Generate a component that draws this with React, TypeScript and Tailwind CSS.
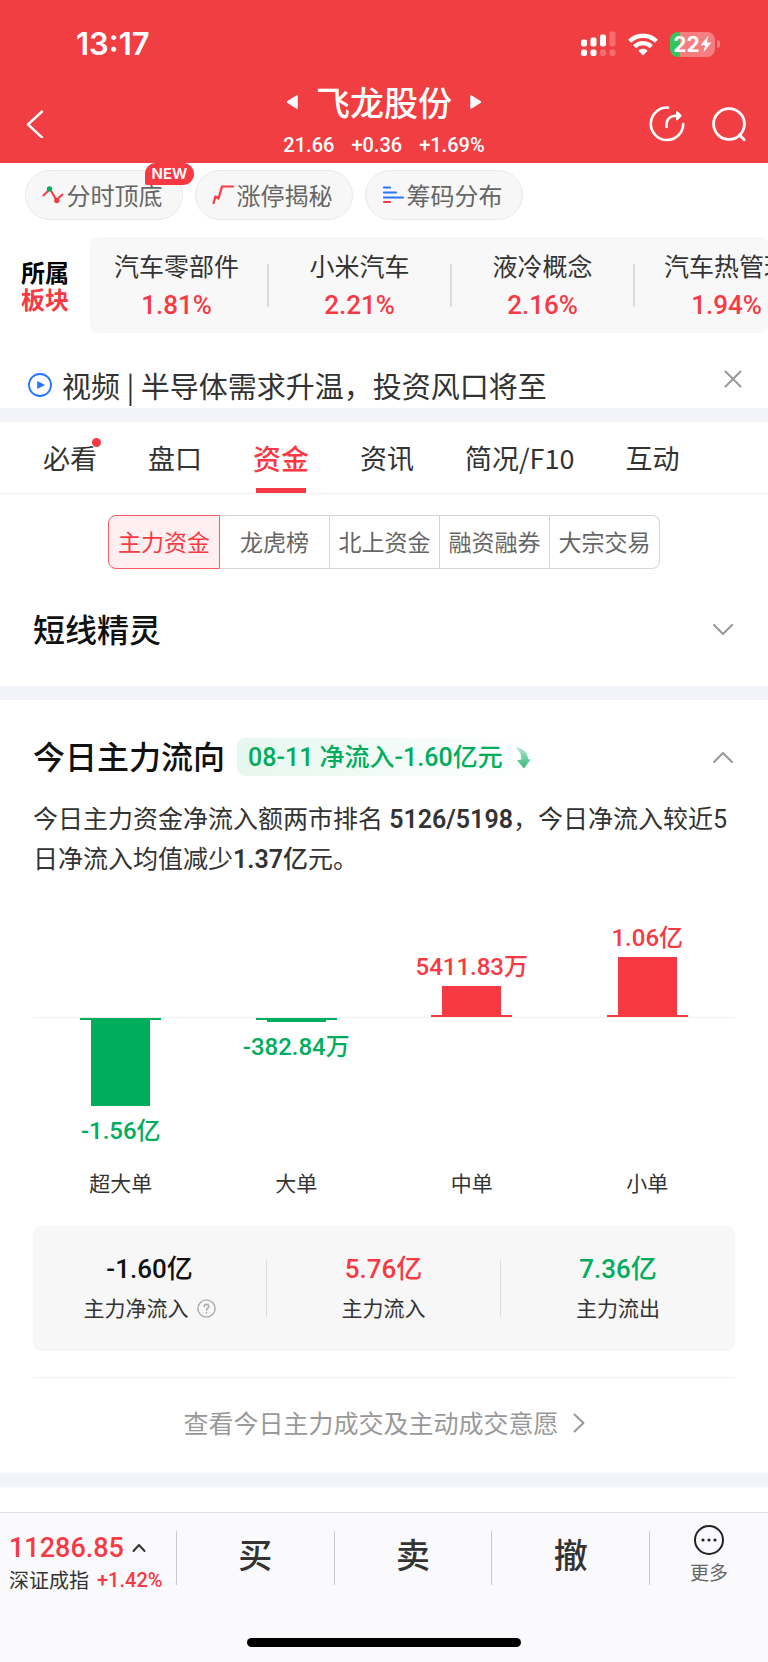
import type { ReactNode } from "react";

type Sector = { name: string; change: string };
type Flow = { label: string; value: string; height: number; up: boolean };

const tools = ["分时顶底", "涨停揭秘", "筹码分布"];

const sectors: Sector[] = [
  { name: "汽车零部件", change: "1.81%" },
  { name: "小米汽车", change: "2.21%" },
  { name: "液冷概念", change: "2.16%" },
  { name: "汽车热管理", change: "1.94%" },
];

const tabs = ["必看", "盘口", "资金", "资讯", "简况/F10", "互动"];
const subTabs = ["主力资金", "龙虎榜", "北上资金", "融资融券", "大宗交易"];

const flows: Flow[] = [
  { label: "超大单", value: "-1.56亿", height: 88, up: false },
  { label: "大单", value: "-382.84万", height: 4, up: false },
  { label: "中单", value: "5411.83万", height: 31, up: true },
  { label: "小单", value: "1.06亿", height: 60, up: true },
];

const Chevron: React.FC<{ className: string; d: string; box: string }> = ({
  className,
  d,
  box,
}) => (
  <svg className={className} viewBox={box} fill="none" stroke="currentColor" strokeWidth="2">
    <path d={d} strokeLinecap="round" strokeLinejoin="round" />
  </svg>
);

const StatusIcons: React.FC = () => (
  <div className="flex items-center gap-3">
    <svg className="h-[26px] w-[35px]" viewBox="0 0 35 26" fill="#fff">
      <rect x="0" y="8.5" width="6" height="7" rx="2" />
      <rect x="9.5" y="6.5" width="6" height="9" rx="2" />
      <rect x="19" y="3.5" width="6" height="12" rx="2" />
      <rect x="28.5" y="0.5" width="6" height="15" rx="2" opacity=".25" />
      <rect x="0" y="18.5" width="6" height="6.5" rx="2" />
      <rect x="9.5" y="18.5" width="6" height="6.5" rx="2" />
      <rect x="19" y="18.5" width="6" height="6.5" rx="2" opacity=".25" />
      <rect x="28.5" y="18.5" width="6" height="6.5" rx="2" opacity=".25" />
    </svg>
    <svg className="h-[23px] w-[30px]" viewBox="0 0 30 23" fill="none" stroke="#fff">
      <path d="M1.6 8.2C9 .9 21 .9 28.4 8.2" strokeWidth="4.4" />
      <path d="M6.6 13.6C11.4 9 18.6 9 23.4 13.6" strokeWidth="4.4" />
      <path d="M10.4 17.8C13 15.2 17 15.2 19.6 17.8L15 22.4Z" fill="#fff" stroke="none" />
    </svg>
    <div className="flex items-center gap-0.5">
      <div className="flex h-[25px] w-[45px] items-center justify-center overflow-hidden rounded-lg bg-[linear-gradient(90deg,#34c759_10px,#f67e81_10px)] font-['Inter'] text-[21px] leading-[25px] font-bold">
        22
        <svg className="h-[18px] w-[12px]" viewBox="0 0 12 18" fill="#fff">
          <path d="M8.6 0.5L0.6 10.2H5.2L3.4 17.5L11.4 7.6H6.8Z" />
        </svg>
      </div>
      <span className="h-2 w-[3px] rounded-r-full bg-[#f67e81]" />
    </div>
  </div>
);

const Header: React.FC = () => (
  <header className="h-[163px] bg-[#f03e42] text-white">
    <div className="flex h-[82px] items-center justify-between pt-1.5 pr-12 pl-[76px]">
      <span className="font-['Inter'] text-[31px] font-semibold">13:17</span>
      <StatusIcons />
    </div>
    <div className="grid grid-cols-[1fr_auto_1fr] items-start">
      <button type="button" aria-label="返回" className="ml-6 w-6 pt-[28px]">
        <svg className="h-[28px] w-[20px]" viewBox="0 0 20 28" fill="none" stroke="#fff" strokeWidth="2.4">
          <path d="M18 1.5L4 14.5L18 27.5" strokeLinecap="round" strokeLinejoin="round" />
        </svg>
      </button>
      <div className="flex flex-col items-center">
        <div className="flex items-center gap-[18px]">
          <button type="button" aria-label="上一只">
            <svg className="h-4 w-3" viewBox="0 0 12 16" fill="#fff" stroke="#fff" strokeWidth="1.5" strokeLinejoin="round">
              <path d="M11 2V14L1.5 8Z" />
            </svg>
          </button>
          <h1 className="text-[34px] leading-[40px] font-medium">飞龙股份</h1>
          <button type="button" aria-label="下一只">
            <svg className="h-4 w-3" viewBox="0 0 12 16" fill="#fff" stroke="#fff" strokeWidth="1.5" strokeLinejoin="round">
              <path d="M1 2V14L10.5 8Z" />
            </svg>
          </button>
        </div>
        <p className="mt-[9px] flex gap-[17px] font-['Roboto'] text-[20px] leading-[28px] font-medium">
          <span>21.66</span>
          <span>+0.36</span>
          <span>+1.69%</span>
        </p>
      </div>
      <div className="flex justify-end gap-6 pt-[23px] pr-5">
        <button type="button" aria-label="分享">
          <svg className="h-[38px] w-[38px]" viewBox="0 0 38 38" fill="none" stroke="#fff" strokeWidth="2.6" strokeLinecap="round">
            <path d="M20 2.6A16.2 16.2 0 1 0 35.2 19" />
            <path d="M18.6 21.8C18 14.5 21.5 10.6 29.5 10.8" />
            <path d="M29 7L32.6 10.8L29 14.4Z" fill="#fff" strokeWidth="2" strokeLinejoin="round" />
          </svg>
        </button>
        <button type="button" aria-label="搜索">
          <svg className="h-[38px] w-[38px]" viewBox="0 0 38 38" fill="none" stroke="#fff" strokeWidth="2.8" strokeLinecap="round">
            <circle cx="19" cy="19" r="15.4" />
            <path d="M29.5 30L34.2 34.8" />
          </svg>
        </button>
      </div>
    </div>
  </header>
);

const toolIcons: ReactNode[] = [
  <svg key="a" className="h-[22px] w-[22px]" viewBox="0 0 22 22" fill="none" strokeWidth="2" strokeLinecap="round">
    <path d="M1.5 11.5L6 7" stroke="#f73944" />
    <path d="M9.5 7.5L13.5 14.5M16.5 14L20.5 10.5" stroke="#f73944" />
    <circle cx="7.5" cy="5" r="2.7" fill="#00ad5c" />
    <circle cx="14.8" cy="16.5" r="2.7" fill="#f73944" />
  </svg>,
  <svg key="b" className="h-[22px] w-[22px]" viewBox="0 0 22 22" fill="none" stroke="#f73944" strokeWidth="2.2" strokeLinecap="round" strokeLinejoin="round">
    <path d="M1.5 19L3.5 12.5L6.5 14.5L10 2.5H21" />
  </svg>,
  <svg key="c" className="h-[22px] w-[22px]" viewBox="0 0 22 22" fill="none" stroke="#2476ff" strokeWidth="2.2" strokeLinecap="round">
    <path d="M2 3.5H8M2 8.5H14M2 13.5H21" />
    <path d="M2 18H8" stroke="#f73944" />
  </svg>,
];

const ToolBar: React.FC = () => (
  <div className="flex gap-3 px-[25px] pt-[7px]">
    {tools.map((tool, i) => (
      <button
        type="button"
        key={tool}
        className="relative flex h-[50px] w-[158px] items-center justify-center gap-[3px] rounded-full border border-[#e9e9e9] bg-[#f7f7f7] pr-1 text-2xl text-[#666]"
      >
        {toolIcons[i]}
        {tool}
        {i === 0 && (
          <span className="absolute -top-2 -right-3 h-[22px] w-[49px] rounded-t-[11px] rounded-br-[11px] rounded-bl-xs bg-[#f73944] text-center font-['Inter'] text-[15px] leading-[22px] font-semibold text-white">
            NEW
          </span>
        )}
      </button>
    ))}
  </div>
);

const Sectors: React.FC = () => (
  <div className="mt-[17px] flex items-center">
    <h2 className="w-[90px] shrink-0 pl-[21px] text-2xl leading-[27px] font-bold text-black">
      所属
      <span className="block text-[#f73944]">板块</span>
    </h2>
    <ul className="flex h-24 min-w-0 flex-1 items-center overflow-hidden rounded-lg bg-[#f8f8f8]">
      {sectors.map((s, i) => (
        <li
          key={s.name}
          className="flex w-[183px] shrink-0 items-center first:w-[179px] first:[&>a]:pr-1"
        >
          <a href="#sector" className="block flex-1 text-center whitespace-nowrap">
            <span className="block text-[25px] leading-[36px] text-[#333]">{s.name}</span>
            <span className="block pt-1 font-['Roboto'] text-[26px] leading-[36px] font-medium text-[#f73944]">
              {s.change}
            </span>
          </a>
          {i < sectors.length - 1 && <span className="h-[43px] w-0.5 bg-[#ddd]" />}
        </li>
      ))}
    </ul>
  </div>
);

const News: React.FC = () => (
  <div className="flex h-[75px] items-center pt-7 pr-[26px] pl-7">
    <svg className="mr-2.5 h-6 w-6 shrink-0" viewBox="0 0 24 24">
      <circle cx="12" cy="12" r="11" fill="none" stroke="#2476ff" strokeWidth="1.8" />
      <path d="M9.2 8L17 12L9.2 16Z" fill="#2476ff" />
    </svg>
    <a href="#video" className="flex-1 text-[29px] leading-[40px] text-[#333]">
      视频 | 半导体需求升温，投资风口将至
    </a>
    <button type="button" aria-label="关闭" className="pb-3">
      <Chevron className="h-[18px] w-[18px] text-[#999]" box="0 0 18 18" d="M1.5 1.5L16.5 16.5M16.5 1.5L1.5 16.5" />
    </button>
  </div>
);

const Tabs: React.FC = () => (
  <nav className="flex h-[72px] gap-[51px] border-b border-[#f1f1f1] pl-[43px] text-[27px] leading-[72px] text-[#333]">
    {tabs.map((tab) => (
      <a
        href="#tab"
        key={tab}
        className={
          tab === "资金"
            ? "relative text-[28px] font-medium text-[#f73944]"
            : "relative whitespace-nowrap"
        }
      >
        {tab}
        {tab === "必看" && (
          <span className="absolute top-4 -right-1 h-[9px] w-[9px] rounded-full bg-[#f73944]" />
        )}
        {tab === "资金" && (
          <span className="absolute inset-x-[3px] bottom-0 h-[5px] bg-[#f73944]" />
        )}
      </a>
    ))}
  </nav>
);

const SubTabs: React.FC = () => (
  <div className="mt-[21px] flex justify-center">
    {subTabs.map((tab, i) => (
      <button
        type="button"
        key={tab}
        className={
          i === 0
            ? "h-[54px] w-[112px] rounded-l-lg border border-[#f95a64] bg-[#ffeff0] pb-0.5 text-[23px] text-[#f73944]"
            : "h-[54px] w-[110px] border border-l-0 border-[#d5d5d5] pb-0.5 text-[23px] text-[#666] last:rounded-r-lg"
        }
      >
        {tab}
      </button>
    ))}
  </div>
);

const FlowChart: React.FC = () => (
  <div className="grid grid-cols-4">
    {flows.map((f) => {
      const bar = (
        <div
          className={f.up ? "w-[59px] bg-[#f73944]" : "w-[59px] bg-[#00ad5c]"}
          style={{ height: f.height }}
        />
      );
      return (
        <div key={f.label} className="flex flex-col items-center font-['Roboto','Noto_Sans_CJK_SC',sans-serif]">
          <div className="flex h-[137px] flex-col items-center justify-end">
            {f.up && (
              <>
                <span className="text-[24px] leading-[38px] font-medium text-[#f73944]">{f.value}</span>
                {bar}
                <span className="-mt-0.5 h-0.5 w-[81px] bg-[#f73944]" />
              </>
            )}
          </div>
          <span className="h-px w-full bg-[#f1f1f1]" />
          <div className="flex h-[150px] flex-col items-center">
            {!f.up && (
              <>
                <span className="-mb-0.5 h-0.5 w-[81px] bg-[#00ad5c]" />
                {bar}
                <span className="mt-1.5 text-[24px] leading-[38px] font-medium text-[#00ad5c]">{f.value}</span>
              </>
            )}
          </div>
          <span className="text-[21px] leading-[32px] text-[#333]">{f.label}</span>
        </div>
      );
    })}
  </div>
);

const Summary: React.FC = () => (
  <dl className="mt-[26px] grid h-[125px] grid-cols-3 items-center divide-x divide-[#ddd] rounded-lg bg-[#f7f7f7] text-center font-['Roboto','Noto_Sans_CJK_SC',sans-serif]">
    <div className="flex h-[57px] flex-col-reverse justify-center">
      <dt className="flex items-center justify-center gap-2 text-[21px] leading-[40px] text-[#333]">
        主力净流入
        <svg className="h-[19px] w-[19px]" viewBox="0 0 19 19" fill="none" stroke="#aaa" strokeWidth="1.4" strokeLinecap="round">
          <circle cx="9.5" cy="9.5" r="8.6" />
          <path d="M7.2 7.6C7.2 4.6 11.8 4.6 11.8 7.5C11.8 9 9.5 9.3 9.5 11.2M9.5 13.6V13.8" strokeWidth="1.6" />
        </svg>
      </dt>
      <dd className="text-[26px] leading-[40px] font-medium text-[#111]">-1.60亿</dd>
    </div>
    <div className="flex h-[57px] flex-col-reverse justify-center">
      <dt className="text-[21px] leading-[40px] text-[#333]">主力流入</dt>
      <dd className="text-[26px] leading-[40px] font-medium text-[#f73944]">5.76亿</dd>
    </div>
    <div className="flex h-[57px] flex-col-reverse justify-center">
      <dt className="text-[21px] leading-[40px] text-[#333]">主力流出</dt>
      <dd className="text-[26px] leading-[40px] font-medium text-[#00ad5c]">7.36亿</dd>
    </div>
  </dl>
);

const Divider: React.FC = () => <div className="h-3.5 bg-[#f2f4f9]" />;

const MainFlow: React.FC = () => (
  <section className="px-[33px] pt-[38px]">
    <div className="flex h-[38px] items-center">
      <h2 className="pb-1 text-[32px] leading-[34px] font-medium text-[#111]">今日主力流向</h2>
      <div className="ml-3 flex h-[38px] w-[300px] items-center rounded-lg bg-linear-to-r from-[#e6f7ef] to-white pt-0.5 pl-[11px] font-['Roboto','Noto_Sans_CJK_SC',sans-serif] text-[25px] leading-[36px] font-medium whitespace-nowrap text-[#00ad5c]">
        08-11 净流入-1.60亿元
        <svg className="ml-3 h-[22px] w-[16px]" viewBox="0 0 16 22">
          <defs>
            <linearGradient id="drop" x1="0" y1="0" x2="0" y2="1">
              <stop offset="0" stopColor="#b4e6cf" />
              <stop offset="1" stopColor="#2eb877" />
            </linearGradient>
          </defs>
          <path d="M.5.5C8 1 13 5.5 13 12.2H15.8L9 21.5L2 13.2L6.2 12.6C7 8 4.5 3.5.5.5Z" fill="url(#drop)" />
        </svg>
      </div>
      <button type="button" aria-label="收起" className="ml-auto pr-0.5">
        <Chevron className="h-3 w-5 text-[#999]" box="0 0 20 12" d="M1 11L10 2L19 11" />
      </button>
    </div>
    <p className="mt-6 font-['Roboto','Noto_Sans_CJK_SC',sans-serif] text-[25px] leading-[40px] text-[#333]">
      今日主力资金净流入额两市排名 <b className="font-semibold">5126/5198</b>，今日净流入较近5日净流入均值减少<b className="font-semibold">1.37</b><span className="font-medium">亿</span>元。
    </p>
    <FlowChart />
    <Summary />
    <div className="mt-[26px] flex h-24 items-center justify-center border-t border-[#f1f1f1]">
      <a href="#more" className="flex items-center gap-3.5 pb-1.5 text-[25px] text-[#999]">
        查看今日主力成交及主动成交意愿
        <Chevron className="h-5 w-3" box="0 0 12 20" d="M1.5 1.5L10.5 10L1.5 18.5" />
      </a>
    </div>
  </section>
);

const BottomBar: React.FC = () => (
  <footer className="mt-[25px] border-t border-[#ddd] bg-[#fafafc]">
    <div className="flex h-[90px] items-center">
      <button type="button" className="w-[176px] shrink-0 pt-3 pl-[9px] text-left whitespace-nowrap">
        <span className="flex items-center gap-2 font-['Roboto'] text-[27px] leading-[32px] font-medium text-[#f73944]">
          11286.85
          <Chevron className="h-2.5 w-3.5 text-[#333]" box="0 0 14 10" d="M1.5 8L7 2L12.5 8" />
        </span>
        <span className="flex gap-2 text-[20px] leading-[32px] text-[#333]">
          深证成指
          <span className="font-['Roboto'] font-medium text-[#f73944]">+1.42%</span>
        </span>
      </button>
      {["买", "卖", "撤"].map((action) => (
        <button
          type="button"
          key={action}
          className="h-[54px] flex-1 border-l border-[#ccc] pb-2 text-[34px] leading-[46px] font-medium text-[#333] first-of-type:border-[#e5e5e5]"
        >
          {action}
        </button>
      ))}
      <button type="button" className="flex h-[54px] w-[119px] shrink-0 flex-col items-center justify-center border-l border-[#ccc] pb-1 text-[19px] leading-[32px] text-[#666]">
        <svg className="h-8 w-8 shrink-0" viewBox="0 0 32 32" fill="none" stroke="#222" strokeWidth="2">
          <circle cx="16" cy="16" r="14" />
          <g fill="#222" stroke="none">
            <circle cx="10" cy="16" r="1.6" />
            <circle cx="16" cy="16" r="1.6" />
            <circle cx="22" cy="16" r="1.6" />
          </g>
        </svg>
        更多
      </button>
    </div>
    <div className="flex h-[59px] items-end justify-center pb-[15px]">
      <span className="h-[9px] w-[274px] rounded-full bg-black" />
    </div>
  </footer>
);

const App: React.FC = () => {
  return (
    <div className="w-full overflow-hidden bg-white font-['Noto_Sans_CJK_SC',sans-serif]">
      <Header />
      <main>
        <ToolBar />
        <Sectors />
        <News />
        <Divider />
        <Tabs />
        <SubTabs />
        <section className="flex h-[117px] items-center justify-between px-[33px]">
          <h2 className="text-[32px] font-medium text-[#111]">短线精灵</h2>
          <button type="button" aria-label="展开" className="pt-1 pr-0.5">
            <Chevron className="h-3 w-5 text-[#999]" box="0 0 20 12" d="M1 1L10 10L19 1" />
          </button>
        </section>
        <Divider />
        <MainFlow />
        <Divider />
      </main>
      <BottomBar />
    </div>
  );
};

export default App;
